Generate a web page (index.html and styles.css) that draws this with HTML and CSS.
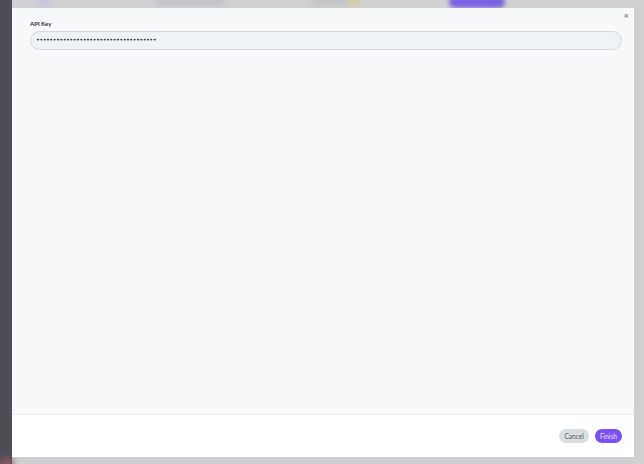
FILE: index.html
```html
<!DOCTYPE html>
<html>
<head>
<meta charset="utf-8">
<link rel="stylesheet" href="styles.css">
</head>
<body>
<div class="backdrop">
  <div class="sidebar"><span class="side-dot"></span></div>
  <div class="main">
    <div class="topbar">
      <span class="blob blob-a"></span>
      <span class="blob blob-b"></span>
      <span class="blob blob-c"></span>
      <span class="blob blob-d"></span>
      <span class="blob blob-e"></span>
    </div>
  </div>
</div>
<div class="modal">
  <button class="close" type="button">×</button>
  <div class="modal-body">
    <label class="label" for="key">API Key</label>
    <div class="input">••••••••••••••••••••••••••••••••••••</div>
  </div>
  <div class="modal-footer">
    <button class="btn btn-cancel" type="button">Cancel</button>
    <button class="btn btn-finish" type="button">Finish</button>
  </div>
</div>
</body>
</html>
```
FILE: styles.css
```css
html, body {
  margin: 0;
  padding: 0;
  width: 644px;
  height: 464px;
  overflow: hidden;
  font-family: Lato, "Liberation Sans", sans-serif;
}
.backdrop {
  display: flex;
  width: 644px;
  height: 464px;
  background: #d0d0d3;
}
.sidebar {
  width: 12px;
  background: #4f4e57;
  position: relative;
}
.side-dot {
  position: absolute;
  left: 0;
  bottom: -4px;
  width: 14px;
  height: 10px;
  border-radius: 50%;
  background: #8a5a62;
  filter: blur(3px);
}
.main {
  flex: 1;
}
.topbar {
  height: 8px;
  position: relative;
}
.blob {
  position: absolute;
  top: -2px;
  height: 8px;
  border-radius: 6px;
  filter: blur(2px);
}
.blob-a { left: 26px; width: 12px; background: #c6c3dc; }
.blob-b { left: 143px; width: 70px; background: #c3c2c8; }
.blob-c { left: 300px; width: 40px; background: #c4c4c6; }
.blob-d { left: 336px; width: 14px; background: #d6cca8; }
.blob-e { left: 437px; width: 56px; top: -4px; height: 12px; background: #7b61e0; }

.modal {
  position: absolute;
  left: 12px;
  top: 8px;
  width: 622px;
  height: 449px;
  display: flex;
  flex-direction: column;
  background: #f7f8fa;
}
.close {
  position: absolute;
  right: 5px;
  top: 5px;
  border: 0;
  background: none;
  padding: 0;
  font-size: 7px;
  line-height: 7px;
  color: #555;
  font-family: "DejaVu Sans", sans-serif;
}
.modal-body {
  flex: 1;
  padding: 12px 12px 0 18px;
}
.label {
  display: block;
  font-size: 6px;
  font-weight: 700;
  color: #2f2f35;
  line-height: 7px;
  margin-bottom: 4px;
}
.input {
  height: 17px;
  border: 1px solid #d3d9e0;
  border-radius: 10px;
  background: #eff2f5;
  padding: 0 5px;
  font-size: 6.5px;
  line-height: 17px;
  color: #2e2e34;
  letter-spacing: -0.5px;
  font-family: "DejaVu Sans", sans-serif;
}
.modal-footer {
  height: 42px;
  border-top: 1px solid #e6e8ec;
  background: #ffffff;
  display: flex;
  justify-content: flex-end;
  align-items: center;
  gap: 6px;
  padding: 0 12px;
}
.btn {
  border: 0;
  height: 14px;
  border-radius: 7px;
  padding: 0 5px;
  font-family: Lato, "Liberation Sans", sans-serif;
  font-size: 6.6px;
  line-height: 14px;
}
.btn-cancel {
  background: #d9dee2;
  color: #555b63;
}
.btn-finish {
  background: #7a4ff5;
  color: #ece6ff;
}
```
